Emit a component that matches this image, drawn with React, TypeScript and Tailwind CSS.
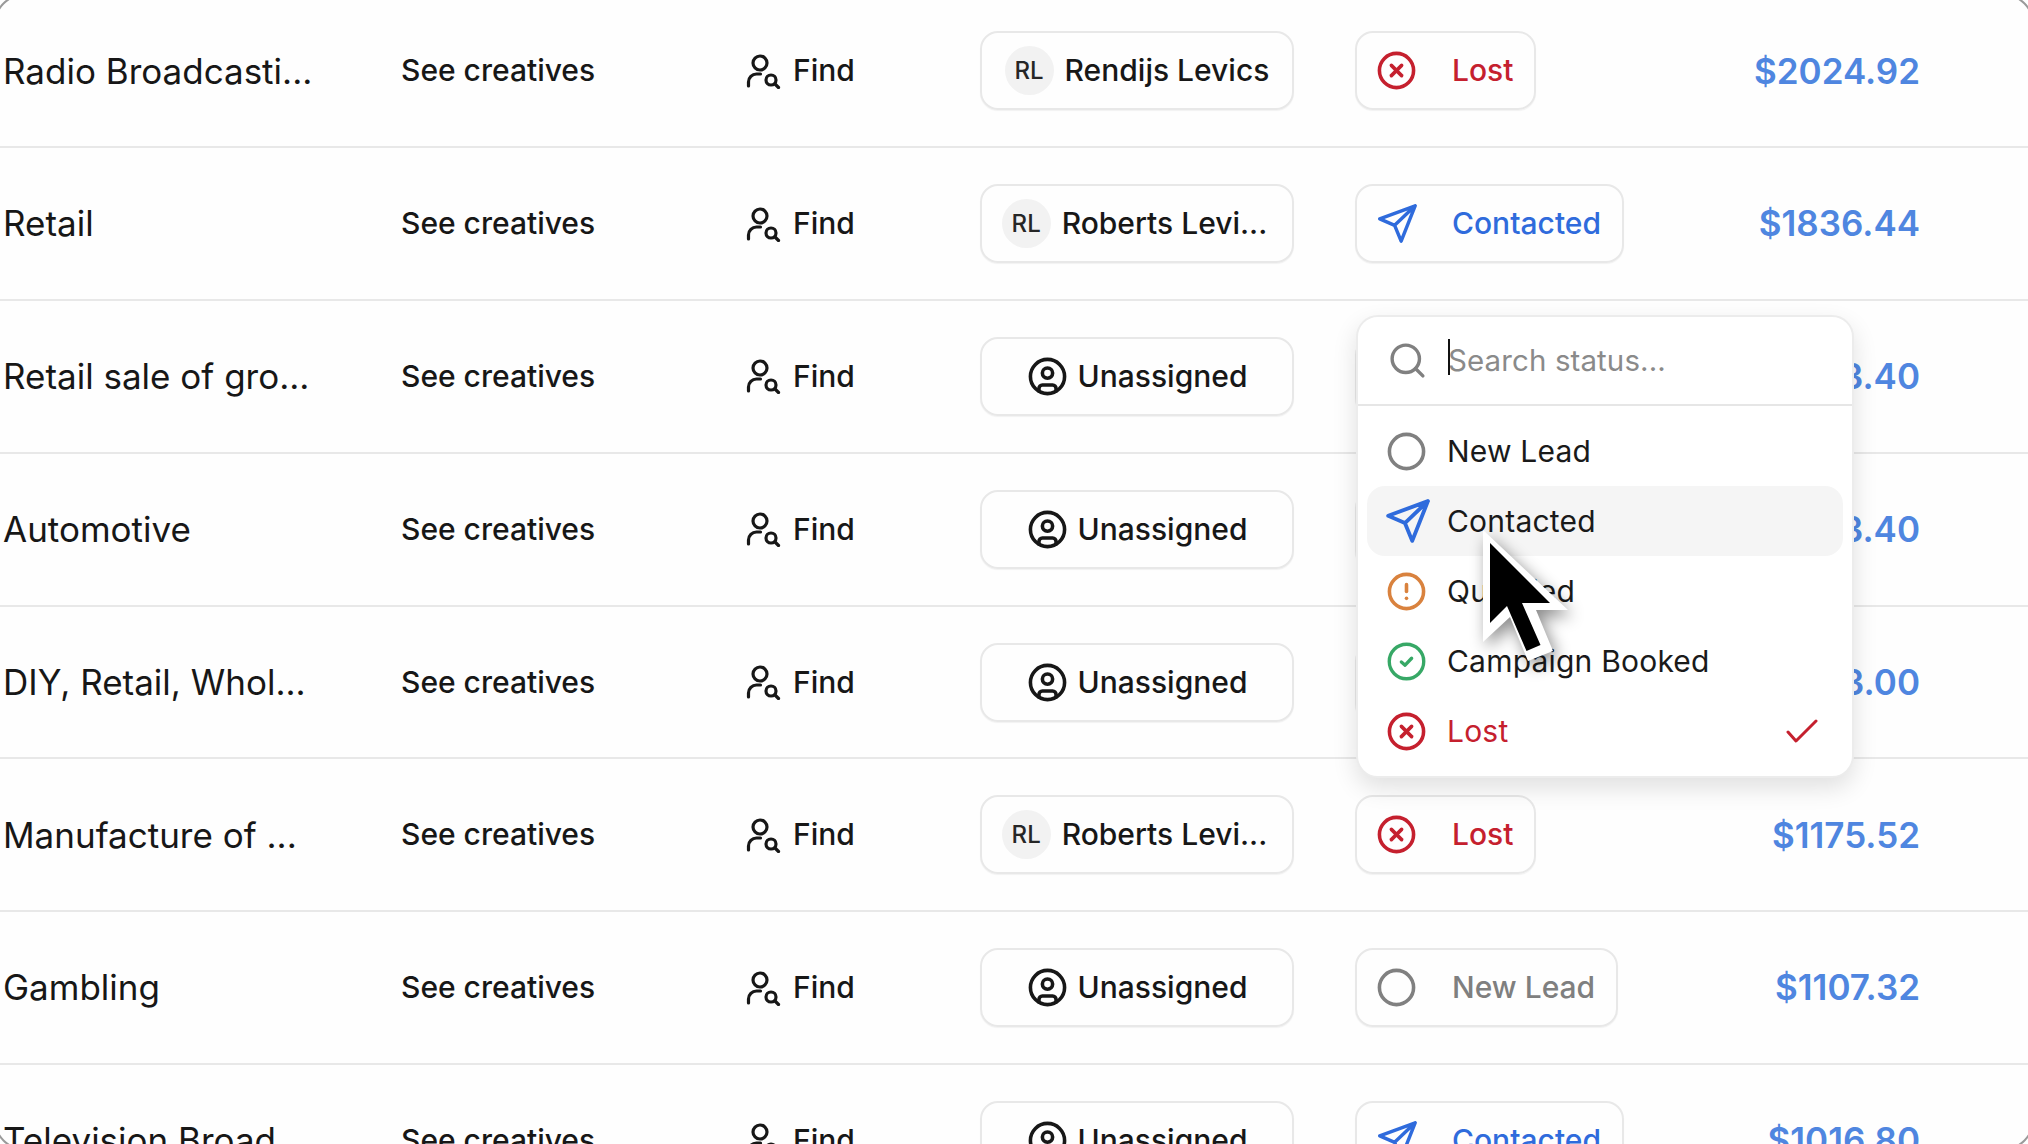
import { Circle, CircleAlert, CircleUser, CircleX, Search } from "lucide-react";

type StatusName = "New Lead" | "Contacted" | "Qualified" | "Campaign Booked" | "Lost";

const rows = [
  { name: "Radio Broadcasti...", owner: "Rendijs Levics", initials: true, status: "Lost", price: "$2024.92" },
  { name: "Retail", owner: "Roberts Levi...", initials: true, status: "Contacted", price: "$1836.44" },
  { name: "Retail sale of gro...", owner: "", initials: false, status: "Lost", price: "$1683.40" },
  { name: "Automotive", owner: "", initials: false, status: "Qualified", price: "$1483.40" },
  { name: "DIY, Retail, Whol...", owner: "", initials: false, status: "New Lead", price: "$1233.00" },
  { name: "Manufacture of ...", owner: "Roberts Levi...", initials: true, status: "Lost", price: "$1175.52" },
  { name: "Gambling", owner: "", initials: false, status: "New Lead", price: "$1107.32" },
  { name: "Television Broad...", owner: "", initials: false, status: "Contacted", price: "$1016.80" },
] as const;

function FindIcon() {
  return (
    <svg viewBox="0 0 36 36" className="w-9 h-9 shrink-0" fill="none" stroke="#171717" strokeWidth="3.2" strokeLinecap="round">
      <circle cx="15" cy="10" r="7" />
      <path d="M3.5 33v-4a8 8 0 0 1 8-8h4" />
      <circle cx="26" cy="27" r="5" />
      <path d="M30 31L33.5 34.5" />
    </svg>
  );
}

function PlaneIcon({ large }: { large?: boolean }) {
  return (
    <svg
      viewBox="0 0 44 44"
      className={large ? "w-[46px] h-[46px] -mx-[2.5px] shrink-0" : "w-[41px] h-[41px] shrink-0"}
      fill="none"
      stroke="#2f6bdc"
      strokeWidth="3.7"
      strokeLinejoin="round"
      strokeLinecap="round"
    >
      <path d="M42 3L4 17l16 7 7 17zM42 3L20 24" />
    </svg>
  );
}

function BookedIcon() {
  return (
    <svg viewBox="0 0 44 44" className="w-[41px] h-[41px] shrink-0" fill="none" stroke="#37a866" strokeWidth="3.6" strokeLinecap="round" strokeLinejoin="round">
      <circle cx="22" cy="22" r="18.500" />
      <path d="M16.500 22.500l4 3.500 7-7.500" />
    </svg>
  );
}

function StatusIcon({ status, large }: { status: StatusName; large?: boolean }) {
  if (status === "Contacted") return <PlaneIcon large={large} />;
  if (status === "Campaign Booked") return <BookedIcon />;
  if (status === "Lost") return <CircleX size={41} strokeWidth={2.1} className="shrink-0 text-[#c5202e]" />;
  if (status === "Qualified") return <CircleAlert size={41} strokeWidth={2.1} className="shrink-0 text-[#d9823e]" />;
  return <Circle size={41} strokeWidth={2.1} className="shrink-0 text-[#808080]" />;
}

function statusColor(status: StatusName) {
  if (status === "Contacted") return "text-[#2f6bdc]";
  if (status === "Lost") return "text-[#c5202e]";
  return "text-[#7f7f7f]";
}

function Owner({ owner, initials }: { owner: string; initials: boolean }) {
  return (
    <div
      className={`w-[314px] h-[79px] rounded-[18px] border-2 border-[#e8e8e8] flex items-center justify-center shadow-[0_1px_1px_rgba(0,0,0,0.05)] ${owner === "Roberts Levi..." ? "pr-[5px]" : ""}`}
    >
      {initials ? (
        <>
          <span className="w-[49px] h-[49px] rounded-full bg-[#f2f2f2] flex items-center justify-center text-[24px] font-medium text-[#262626]">RL</span>
          <span className="ml-[11px]">{owner}</span>
        </>
      ) : (
        <>
          <CircleUser size={41} strokeWidth={2.1} className="text-[#171717]" />
          <span className="ml-[10px]">Unassigned</span>
        </>
      )}
    </div>
  );
}

function Dropdown() {
  const items: StatusName[] = ["New Lead", "Contacted", "Qualified", "Campaign Booked", "Lost"];
  return (
    <div className="absolute left-[1356px] top-[315px] w-[498px] h-[463px] rounded-[22px] bg-white border-2 border-[#ececec] shadow-[0_10px_24px_rgba(0,0,0,0.12)] text-[30px] font-normal tracking-[0.2px]">
      <div className="h-[89px] border-b-2 border-[#e6e6e6] flex items-center pl-[29px]">
        <Search size={41} strokeWidth={2} className="text-[#808080]" />
        <span className="ml-[20px] relative text-[29.5px] tracking-[0.1px] text-[#8a8a8a]">
          <span className="absolute left-0 top-[1px] w-[2px] h-[36px] bg-[#111111]" />
          Search status...
        </span>
      </div>
      <div className="px-[9px] pt-[10px]">
        {items.map((item) => (
          <div
            key={item}
            className={`h-[70px] rounded-[18px] flex items-center pl-[19px] pr-[25px] ${item === "Contacted" ? "bg-[#f5f5f5]" : ""} ${item === "Lost" ? "text-[#c5202e]" : "text-[#1a1a1a]"}`}
          >
            <StatusIcon status={item} large />
            <span className="ml-[20px] flex-1">{item}</span>
            {item === "Lost" && (
              <svg viewBox="0 0 32 24" className="w-8 h-6" fill="none" stroke="#c5202e" strokeWidth="3" strokeLinecap="round" strokeLinejoin="round">
                <path d="M2 13l8 9L30 2" />
              </svg>
            )}
          </div>
        ))}
      </div>
    </div>
  );
}

function Pointer() {
  return (
    <svg viewBox="0 0 100 140" className="absolute left-[1473px] top-[525px] w-[100px] h-[140px] drop-shadow-[4px_6px_8px_rgba(0,0,0,0.45)]">
      <path d="M10 5V117L37 92 55 136 80 126 63 85H95z" fill="#ffffff" />
      <path d="M17 18V98L34 81 53.500 126 67.500 120 49 78H77z" fill="#000000" />
    </svg>
  );
}

export default function App() {
  return (
    <div className="relative h-screen overflow-hidden bg-[#fefefe] font-['Inter',sans-serif] text-[30px] font-medium text-[#171717]">
      <div className="-mt-[4.5px]">
        {rows.map((row) => (
          <div key={row.name} className="h-[152.8px] border-b-2 border-[#e8e8e8] flex items-center">
            <div className="w-[401px] pl-[3px] text-[35px] font-normal">{row.name}</div>
            <div className="w-[344px]">See creatives</div>
            <div className="w-[235px] flex items-center gap-[12px]">
              <FindIcon />
              Find
            </div>
            <div className="w-[375px]">
              <Owner owner={row.owner} initials={row.initials} />
            </div>
            <div className="w-[300px]">
              <div className={`inline-flex h-[79px] items-center rounded-[18px] border-2 border-[#e8e8e8] pl-[19px] pr-[21px] gap-[35px] shadow-[0_1px_1px_rgba(0,0,0,0.05)] ${statusColor(row.status)}`}>
                <StatusIcon status={row.status} />
                {row.status}
              </div>
            </div>
            <div className="flex-1 text-right pr-[108px] text-[35px] font-semibold text-[#4f86e0]">{row.price}</div>
          </div>
        ))}
      </div>
      <Dropdown />
      <Pointer />
      <div className="absolute -inset-[6px] rounded-[30px] border-2 border-[#9a9a9a] pointer-events-none" />
    </div>
  );
}
